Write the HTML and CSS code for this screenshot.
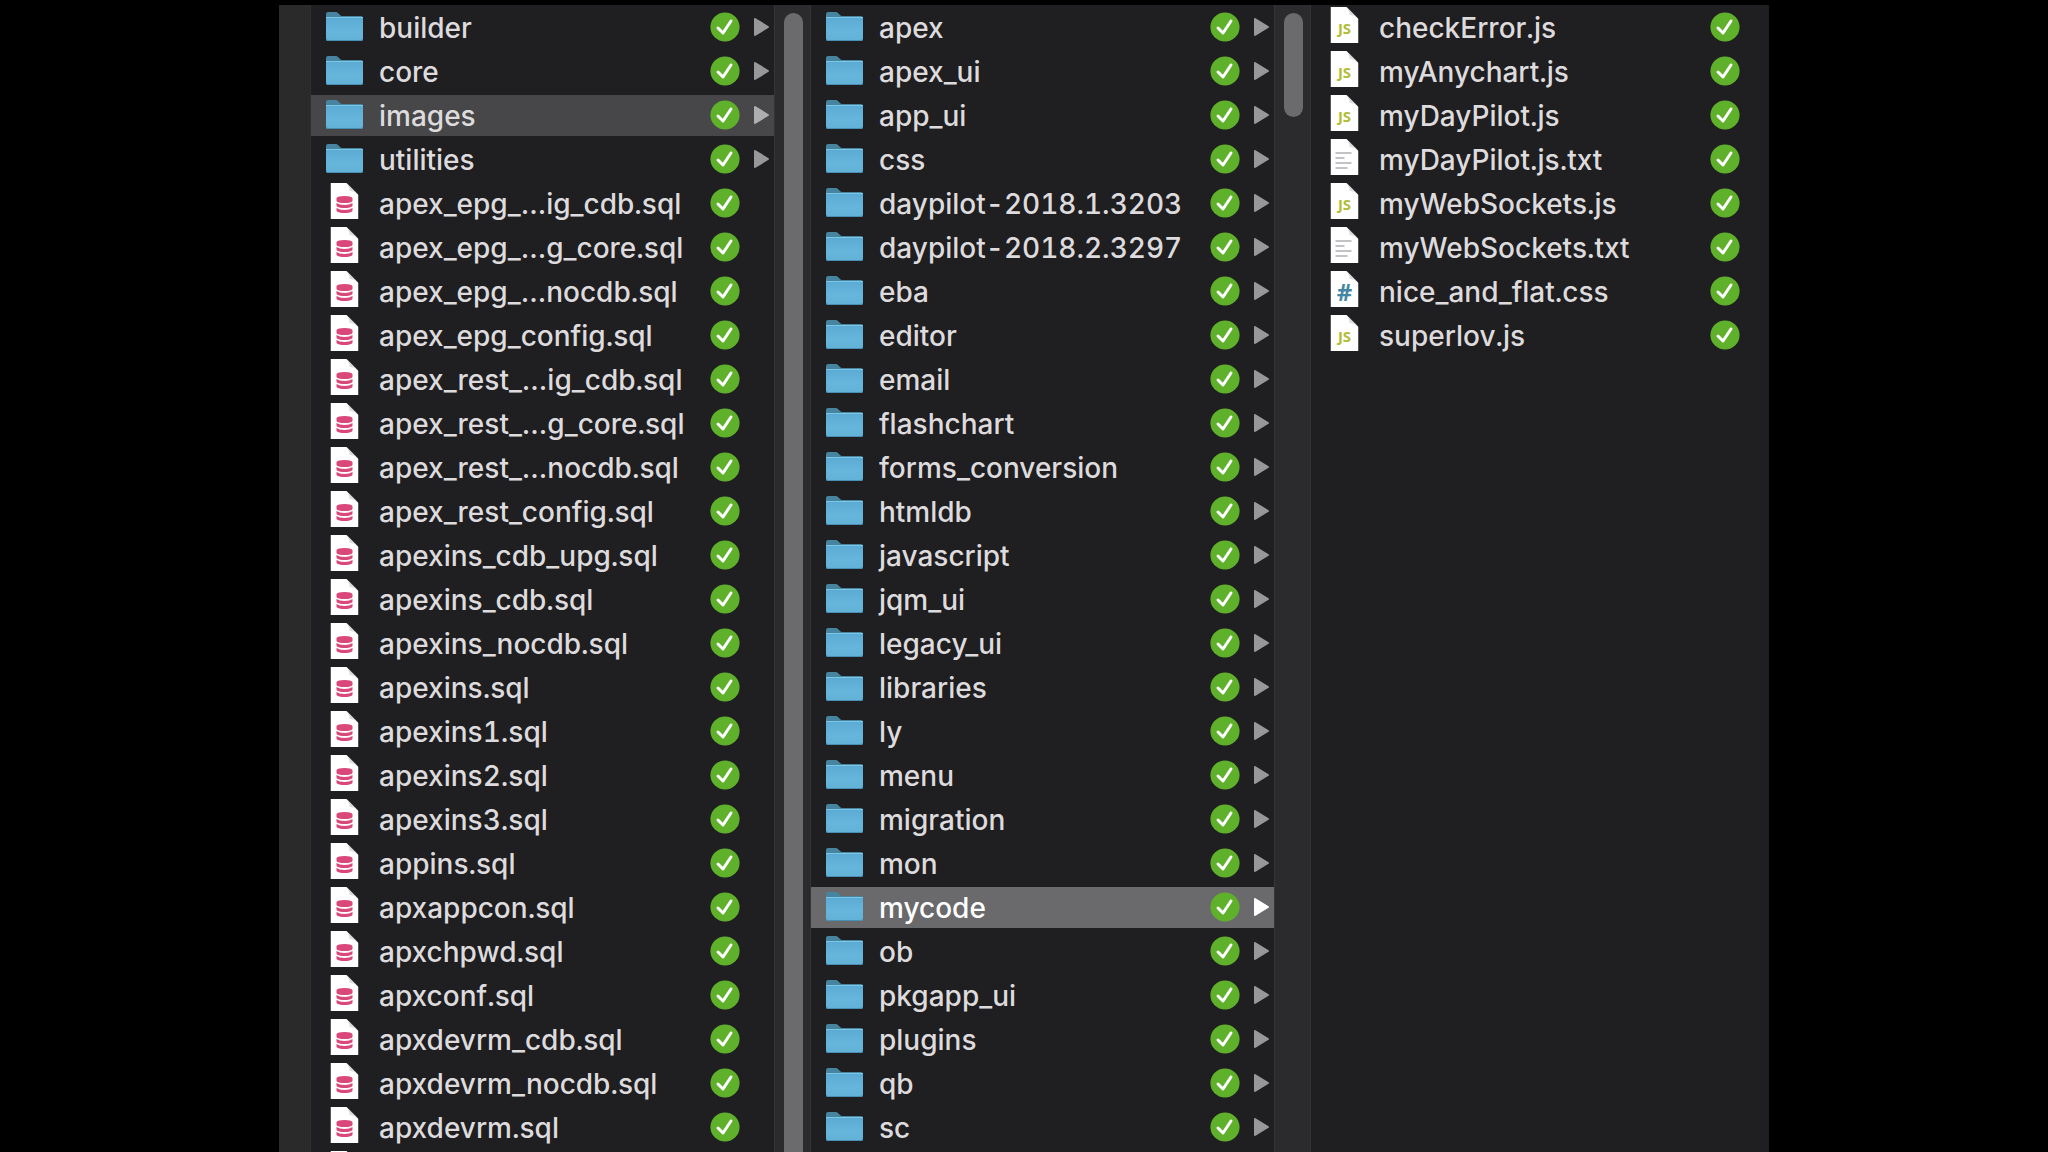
FILE: index.html
```
<!DOCTYPE html>
<html lang="en">
<head>
    <meta charset="UTF-8">
    <meta name="viewport" content="width=device-width, initial-scale=1.0">
    <title>images</title>
    <link rel="stylesheet" href="styles.css">
</head>
<body>
    <svg class="gradients" aria-hidden="true">
        <defs>
            <linearGradient id="folder-front" x1="0" y1="0" x2="0" y2="1">
                <stop offset="0" stop-color="#5aaad3"/>
                <stop offset="0.6" stop-color="#66b6dc"/>
                <stop offset="1" stop-color="#62b1d7"/>
            </linearGradient>
            <linearGradient id="page-fold" x1="0" y1="1" x2="1" y2="0">
                <stop offset="0" stop-color="#ffffff"/>
                <stop offset="0.5" stop-color="#d2d2d2"/>
                <stop offset="1" stop-color="#f4f4f4"/>
            </linearGradient>
        </defs>
    </svg>

    <!-- icons used by the rows -->
    <svg class="sprite" aria-hidden="true">
        <symbol id="folder" viewBox="0 0 37 30">
            <path fill="#47849f" d="M0 2Q0 0 2 0h8q1 0 2 1l2 2q1 1 2 1h19q2 0 2 2v6H0z"/>
            <path fill="url(#folder-front)" d="M0 5h37v22q0 2-2 2H2q-2 0-2-2z"/>
            <path fill="#7cc6e6" d="M0 5h37v1H0z"/>
            <path fill="#4590b4" d="M0 27q0 2 2 2h33q2 0 2-2v-1q0 2-2 2H2q-2 0-2-2z"/>
        </symbol>
        <symbol id="page" viewBox="0 0 28 36">
            <path fill="#fff" d="M0 0h16l12 12v24H0z"/>
            <path fill="url(#page-fold)" d="M16 0l12 12q-3-4-9-4 0-5-3-8z"/>
        </symbol>
        <symbol id="sql" viewBox="0 0 28 36">
            <use href="#page"/>
            <path fill="#d94878" d="M6 15q1-2 8-2t8 2v3q-1 2-8 2t-8-2zM6 20q3 2 8 2t8-2v3q-2 2-8 2t-8-2zM6 25q3 2 8 2t8-2v3q-2 2-8 2t-8-2z"/>
        </symbol>
        <symbol id="js" viewBox="0 0 28 36">
            <use href="#page"/>
            <text class="page-text js-text" x="14" y="27">JS</text>
        </symbol>
        <symbol id="css" viewBox="0 0 28 36">
            <use href="#page"/>
            <text class="page-text css-text" x="14" y="30">#</text>
        </symbol>
        <symbol id="txt" viewBox="0 0 28 36">
            <use href="#page"/>
            <path stroke="#c3c3c5" stroke-width="2" d="M5 14h16M5 19h9M5 24h16M5 29h12"/>
        </symbol>
        <symbol id="check" viewBox="0 0 30 30">
            <circle cx="15" cy="15" r="14.6" fill="#5fb12b"/>
            <path fill="none" stroke="#fff" stroke-width="3" stroke-linecap="round" stroke-linejoin="round" d="M8 16l5 5 8-12"/>
        </symbol>
        <symbol id="arrow" viewBox="0 0 15 18">
            <path fill="currentColor" stroke="currentColor" stroke-width="2" stroke-linejoin="round" d="M1 1v16L14 9z"/>
        </symbol>
    </svg>

    <main class="finder">
        <div class="edge"></div>

        <section class="column">
            <ul class="files">
                <li><svg class="icon"><use href="#folder"/></svg><span class="name">builder</span><svg class="check"><use href="#check"/></svg><svg class="arrow"><use href="#arrow"/></svg></li>
                <li><svg class="icon"><use href="#folder"/></svg><span class="name">core</span><svg class="check"><use href="#check"/></svg><svg class="arrow"><use href="#arrow"/></svg></li>
                <li class="open"><svg class="icon"><use href="#folder"/></svg><span class="name">images</span><svg class="check"><use href="#check"/></svg><svg class="arrow"><use href="#arrow"/></svg></li>
                <li><svg class="icon"><use href="#folder"/></svg><span class="name">utilities</span><svg class="check"><use href="#check"/></svg><svg class="arrow"><use href="#arrow"/></svg></li>
                <li class="file"><svg class="icon"><use href="#sql"/></svg><span class="name">apex_epg_…ig_cdb.sql</span><svg class="check"><use href="#check"/></svg></li>
                <li class="file"><svg class="icon"><use href="#sql"/></svg><span class="name">apex_epg_…g_core.sql</span><svg class="check"><use href="#check"/></svg></li>
                <li class="file"><svg class="icon"><use href="#sql"/></svg><span class="name">apex_epg_…nocdb.sql</span><svg class="check"><use href="#check"/></svg></li>
                <li class="file"><svg class="icon"><use href="#sql"/></svg><span class="name">apex_epg_config.sql</span><svg class="check"><use href="#check"/></svg></li>
                <li class="file"><svg class="icon"><use href="#sql"/></svg><span class="name">apex_rest_…ig_cdb.sql</span><svg class="check"><use href="#check"/></svg></li>
                <li class="file"><svg class="icon"><use href="#sql"/></svg><span class="name">apex_rest_…g_core.sql</span><svg class="check"><use href="#check"/></svg></li>
                <li class="file"><svg class="icon"><use href="#sql"/></svg><span class="name">apex_rest_…nocdb.sql</span><svg class="check"><use href="#check"/></svg></li>
                <li class="file"><svg class="icon"><use href="#sql"/></svg><span class="name">apex_rest_config.sql</span><svg class="check"><use href="#check"/></svg></li>
                <li class="file"><svg class="icon"><use href="#sql"/></svg><span class="name">apexins_cdb_upg.sql</span><svg class="check"><use href="#check"/></svg></li>
                <li class="file"><svg class="icon"><use href="#sql"/></svg><span class="name">apexins_cdb.sql</span><svg class="check"><use href="#check"/></svg></li>
                <li class="file"><svg class="icon"><use href="#sql"/></svg><span class="name">apexins_nocdb.sql</span><svg class="check"><use href="#check"/></svg></li>
                <li class="file"><svg class="icon"><use href="#sql"/></svg><span class="name">apexins.sql</span><svg class="check"><use href="#check"/></svg></li>
                <li class="file"><svg class="icon"><use href="#sql"/></svg><span class="name">apexins1.sql</span><svg class="check"><use href="#check"/></svg></li>
                <li class="file"><svg class="icon"><use href="#sql"/></svg><span class="name">apexins2.sql</span><svg class="check"><use href="#check"/></svg></li>
                <li class="file"><svg class="icon"><use href="#sql"/></svg><span class="name">apexins3.sql</span><svg class="check"><use href="#check"/></svg></li>
                <li class="file"><svg class="icon"><use href="#sql"/></svg><span class="name">appins.sql</span><svg class="check"><use href="#check"/></svg></li>
                <li class="file"><svg class="icon"><use href="#sql"/></svg><span class="name">apxappcon.sql</span><svg class="check"><use href="#check"/></svg></li>
                <li class="file"><svg class="icon"><use href="#sql"/></svg><span class="name">apxchpwd.sql</span><svg class="check"><use href="#check"/></svg></li>
                <li class="file"><svg class="icon"><use href="#sql"/></svg><span class="name">apxconf.sql</span><svg class="check"><use href="#check"/></svg></li>
                <li class="file"><svg class="icon"><use href="#sql"/></svg><span class="name">apxdevrm_cdb.sql</span><svg class="check"><use href="#check"/></svg></li>
                <li class="file"><svg class="icon"><use href="#sql"/></svg><span class="name">apxdevrm_nocdb.sql</span><svg class="check"><use href="#check"/></svg></li>
                <li class="file"><svg class="icon"><use href="#sql"/></svg><span class="name">apxdevrm.sql</span><svg class="check"><use href="#check"/></svg></li>
                <li class="file"><svg class="icon"><use href="#sql"/></svg></li>
            </ul>
            <div class="scrollbar"><div class="thumb"></div></div>
        </section>

        <section class="column">
            <ul class="files">
                <li><svg class="icon"><use href="#folder"/></svg><span class="name">apex</span><svg class="check"><use href="#check"/></svg><svg class="arrow"><use href="#arrow"/></svg></li>
                <li><svg class="icon"><use href="#folder"/></svg><span class="name">apex_ui</span><svg class="check"><use href="#check"/></svg><svg class="arrow"><use href="#arrow"/></svg></li>
                <li><svg class="icon"><use href="#folder"/></svg><span class="name">app_ui</span><svg class="check"><use href="#check"/></svg><svg class="arrow"><use href="#arrow"/></svg></li>
                <li><svg class="icon"><use href="#folder"/></svg><span class="name">css</span><svg class="check"><use href="#check"/></svg><svg class="arrow"><use href="#arrow"/></svg></li>
                <li><svg class="icon"><use href="#folder"/></svg><span class="name">daypilot-2018.1.3203</span><svg class="check"><use href="#check"/></svg><svg class="arrow"><use href="#arrow"/></svg></li>
                <li><svg class="icon"><use href="#folder"/></svg><span class="name">daypilot-2018.2.3297</span><svg class="check"><use href="#check"/></svg><svg class="arrow"><use href="#arrow"/></svg></li>
                <li><svg class="icon"><use href="#folder"/></svg><span class="name">eba</span><svg class="check"><use href="#check"/></svg><svg class="arrow"><use href="#arrow"/></svg></li>
                <li><svg class="icon"><use href="#folder"/></svg><span class="name">editor</span><svg class="check"><use href="#check"/></svg><svg class="arrow"><use href="#arrow"/></svg></li>
                <li><svg class="icon"><use href="#folder"/></svg><span class="name">email</span><svg class="check"><use href="#check"/></svg><svg class="arrow"><use href="#arrow"/></svg></li>
                <li><svg class="icon"><use href="#folder"/></svg><span class="name">flashchart</span><svg class="check"><use href="#check"/></svg><svg class="arrow"><use href="#arrow"/></svg></li>
                <li><svg class="icon"><use href="#folder"/></svg><span class="name">forms_conversion</span><svg class="check"><use href="#check"/></svg><svg class="arrow"><use href="#arrow"/></svg></li>
                <li><svg class="icon"><use href="#folder"/></svg><span class="name">htmldb</span><svg class="check"><use href="#check"/></svg><svg class="arrow"><use href="#arrow"/></svg></li>
                <li><svg class="icon"><use href="#folder"/></svg><span class="name">javascript</span><svg class="check"><use href="#check"/></svg><svg class="arrow"><use href="#arrow"/></svg></li>
                <li><svg class="icon"><use href="#folder"/></svg><span class="name">jqm_ui</span><svg class="check"><use href="#check"/></svg><svg class="arrow"><use href="#arrow"/></svg></li>
                <li><svg class="icon"><use href="#folder"/></svg><span class="name">legacy_ui</span><svg class="check"><use href="#check"/></svg><svg class="arrow"><use href="#arrow"/></svg></li>
                <li><svg class="icon"><use href="#folder"/></svg><span class="name">libraries</span><svg class="check"><use href="#check"/></svg><svg class="arrow"><use href="#arrow"/></svg></li>
                <li><svg class="icon"><use href="#folder"/></svg><span class="name">ly</span><svg class="check"><use href="#check"/></svg><svg class="arrow"><use href="#arrow"/></svg></li>
                <li><svg class="icon"><use href="#folder"/></svg><span class="name">menu</span><svg class="check"><use href="#check"/></svg><svg class="arrow"><use href="#arrow"/></svg></li>
                <li><svg class="icon"><use href="#folder"/></svg><span class="name">migration</span><svg class="check"><use href="#check"/></svg><svg class="arrow"><use href="#arrow"/></svg></li>
                <li><svg class="icon"><use href="#folder"/></svg><span class="name">mon</span><svg class="check"><use href="#check"/></svg><svg class="arrow"><use href="#arrow"/></svg></li>
                <li class="selected"><svg class="icon"><use href="#folder"/></svg><span class="name">mycode</span><svg class="check"><use href="#check"/></svg><svg class="arrow"><use href="#arrow"/></svg></li>
                <li><svg class="icon"><use href="#folder"/></svg><span class="name">ob</span><svg class="check"><use href="#check"/></svg><svg class="arrow"><use href="#arrow"/></svg></li>
                <li><svg class="icon"><use href="#folder"/></svg><span class="name">pkgapp_ui</span><svg class="check"><use href="#check"/></svg><svg class="arrow"><use href="#arrow"/></svg></li>
                <li><svg class="icon"><use href="#folder"/></svg><span class="name">plugins</span><svg class="check"><use href="#check"/></svg><svg class="arrow"><use href="#arrow"/></svg></li>
                <li><svg class="icon"><use href="#folder"/></svg><span class="name">qb</span><svg class="check"><use href="#check"/></svg><svg class="arrow"><use href="#arrow"/></svg></li>
                <li><svg class="icon"><use href="#folder"/></svg><span class="name">sc</span><svg class="check"><use href="#check"/></svg><svg class="arrow"><use href="#arrow"/></svg></li>
            </ul>
            <div class="scrollbar"><div class="thumb short"></div></div>
        </section>

        <section class="column last">
            <ul class="files">
                <li class="file"><svg class="icon"><use href="#js"/></svg><span class="name">checkError.js</span><svg class="check"><use href="#check"/></svg></li>
                <li class="file"><svg class="icon"><use href="#js"/></svg><span class="name">myAnychart.js</span><svg class="check"><use href="#check"/></svg></li>
                <li class="file"><svg class="icon"><use href="#js"/></svg><span class="name">myDayPilot.js</span><svg class="check"><use href="#check"/></svg></li>
                <li class="file"><svg class="icon"><use href="#txt"/></svg><span class="name">myDayPilot.js.txt</span><svg class="check"><use href="#check"/></svg></li>
                <li class="file"><svg class="icon"><use href="#js"/></svg><span class="name">myWebSockets.js</span><svg class="check"><use href="#check"/></svg></li>
                <li class="file"><svg class="icon"><use href="#txt"/></svg><span class="name">myWebSockets.txt</span><svg class="check"><use href="#check"/></svg></li>
                <li class="file"><svg class="icon"><use href="#css"/></svg><span class="name">nice_and_flat.css</span><svg class="check"><use href="#check"/></svg></li>
                <li class="file"><svg class="icon"><use href="#js"/></svg><span class="name">superlov.js</span><svg class="check"><use href="#check"/></svg></li>
            </ul>
        </section>
    </main>
</body>
</html>
```
FILE: styles.css
```
* {
    box-sizing: border-box;
}
body {
    margin: 0;
    background-color: #000;
    color: #dddbdd;
    font-family: Inter, "Liberation Sans", sans-serif;
    font-size: 28px;
    font-weight: 500;
    font-variant-numeric: tabular-nums;
    overflow: hidden;
}
.sprite {
    display: none;
}
/* not display: none, the fills would be lost */
.gradients {
    position: absolute;
    width: 0;
    height: 0;
}

/* Window */
.finder {
    display: flex;
    max-width: 1490px;
    height: calc(100vh - 5px);
    margin: 5px auto 0;
    background-color: #1f1e20;
}
.edge {
    flex: 0 0 32px;
    background-color: #2a2a2b;
    border-right: 1px solid #303031;
}
.column {
    display: flex;
    flex: 500 1 0;
    min-width: 0;
}
.column.last {
    flex-grow: 458;
}

/* Rows */
.files {
    flex: 1;
    min-width: 0;
    margin: 0;
    padding: 2px 0 0;
    list-style: none;
}
.files li {
    display: flex;
    align-items: center;
    height: 41px;
    margin-bottom: 3px;
    padding: 0 5px 2px 15px;
}
.files .open {
    background-color: #474648;
}
.files .selected {
    background-color: #6a696b;
    color: #fff;
}
.files .file {
    padding-right: 34px;
}
.last .file {
    padding-right: 29px;
}
.name {
    flex: 1;
    min-width: 0;
    padding-top: 4px;
    line-height: 41px;
    white-space: nowrap;
}
.icon {
    flex: none;
    width: 37px;
    height: 30px;
    margin-right: 16px;
}
.file .icon {
    align-self: flex-start;
    height: 36px;
}
.check {
    flex: none;
    width: 30px;
    height: 30px;
}
.arrow {
    flex: none;
    width: 15px;
    height: 18px;
    margin-left: 14px;
    color: #98979a;
}
.open .arrow {
    color: #aeadaf;
}
.selected .arrow {
    color: #fff;
}

/* Letters on the page icons */
.page-text {
    font-family: "Open Sans", sans-serif;
    font-weight: 700;
    text-anchor: middle;
}
.js-text {
    font-size: 15px;
    fill: #b3bd35;
}
.css-text {
    font-size: 24px;
    fill: #4587a3;
}

/* Scrollbars */
.scrollbar {
    flex: 0 0 37px;
    padding: 8px 7px 0 9px;
    background-color: #2b2a2d;
    border-left: 1px solid #363538;
    border-right: 1px solid #343336;
}
.thumb {
    height: 100%;
    background-color: #6b6a6c;
    border-radius: 10px 10px 0 0;
}
.thumb.short {
    height: 104px;
    border-radius: 10px;
}
```
